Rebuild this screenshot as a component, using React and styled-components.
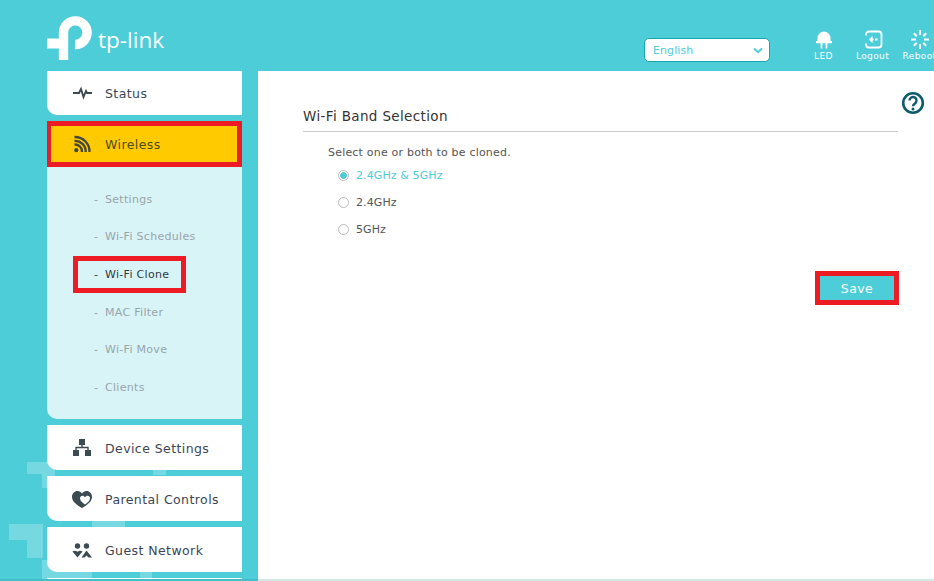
import React from 'react';
import styled, { createGlobalStyle } from 'styled-components';

const GlobalStyle = createGlobalStyle`
  html, body {
    margin: 0;
    padding: 0;
    height: 581px;
    overflow: hidden;
    font-family: "DejaVu Sans", Verdana, sans-serif;
  }
`;

const teal = '#4ccdd8';
const red = '#ed1c24';

const Page = styled.div`
  position: relative;
  display: flex;
  flex-direction: column;
  width: 934px;
  height: 581px;
  overflow: hidden;
  background: ${teal};
`;

const Watermark = styled.svg`
  position: absolute;
  left: 0;
  top: 0;
  width: 260px;
  height: 581px;
`;

const Header = styled.header`
  position: relative;
  display: flex;
  flex: none;
  height: 71px;
  padding-left: 47px;
  overflow: hidden;
`;

const Logo = styled.div`
  display: flex;
  flex: none;
  width: 597px;
  padding-top: 16px;
  box-sizing: border-box;
`;

const Wordmark = styled.span`
  margin: 9px 0 0 5px;
  font-family: "Open Sans", sans-serif;
  font-size: 22.5px;
  line-height: 30px;
  color: #fff;
`;

const LangSelect = styled.div`
  display: flex;
  flex: none;
  align-items: center;
  justify-content: space-between;
  box-sizing: border-box;
  width: 126px;
  height: 24px;
  margin: 38px 29px 0 0;
  padding: 0 6px 0 8px;
  background: #fff;
  border: 1px solid #1aa8b0;
  border-radius: 5px;
  font-size: 11px;
  letter-spacing: 0.1px;
  color: ${teal};
`;

const Action = styled.div`
  display: flex;
  flex: none;
  flex-direction: column;
  align-items: center;
  width: 49px;
  margin-left: ${p => (p.$tight ? -2 : 0)}px;
  padding-top: 30px;
  color: #fff;
  font-size: 9px;
  letter-spacing: 0.4px;
  line-height: 11px;
`;

const ActionIcon = styled.svg`
  width: 20px;
  height: 19px;
  margin-bottom: 2px;
  color: #fff;
`;

const Body = styled.div`
  position: relative;
  display: flex;
  flex: 1;
  min-height: 0;
`;

const Sidebar = styled.nav`
  display: flex;
  flex: none;
  flex-direction: column;
  gap: 6px;
  width: 195px;
  margin: 0 16px 0 47px;
  overflow: hidden;
`;

const SideGroup = styled.div`
  display: flex;
  flex: none;
  flex-direction: column;
`;

const NavItem = styled.div`
  display: flex;
  flex: none;
  align-items: center;
  box-sizing: border-box;
  height: ${p => (p.$active ? 46 : p.$short ? 44 : 45)}px;
  margin-left: ${p => (p.$active ? -1 : 0)}px;
  padding-left: ${p => (p.$active ? 19 : 23)}px;
  padding-top: ${p => (p.$active || p.$short ? 0 : 1)}px;
  background: ${p => (p.$active ? '#ffcb00' : '#fff')};
  border: ${p => (p.$active ? `5px solid ${red}` : 'none')};
  border-bottom-left-radius: ${p => (p.$active ? 0 : 10)}px;
  font-size: 12.5px;
  letter-spacing: 0.42px;
  color: ${p => (p.$active ? '#4d4a22' : '#3b4654')};
`;

const NavIcon = styled.svg`
  flex: none;
  width: 24px;
  height: 20px;
  margin-right: 11px;
  color: ${p => p.$color || '#3c4a52'};
`;

const SubMenu = styled.div`
  display: flex;
  flex-direction: column;
  align-items: flex-start;
  box-sizing: border-box;
  height: 252px;
  padding-top: 13.4px;
  background: #d9f4f6;
  border-bottom-left-radius: 10px;
`;

const SubItem = styled.div`
  display: flex;
  align-items: center;
  box-sizing: border-box;
  height: 37.7px;
  margin-left: 26px;
  padding: 0 12px 0 16px;
  border: 5px solid ${p => (p.$active ? red : 'transparent')};
  font-size: 11px;
  letter-spacing: 0.3px;
  color: ${p => (p.$active ? '#2f3a46' : '#98a4ac')};
`;

const Dash = styled.span`
  width: 11px;
  flex: none;
`;

const Main = styled.main`
  display: flex;
  flex: 1;
  flex-direction: column;
  box-sizing: border-box;
  min-width: 0;
  padding: 20px 36px 0 45px;
  background: #fff;
`;

const HelpRow = styled.div`
  display: flex;
  justify-content: flex-end;
  height: 17px;
  margin-right: -27px;
`;

const SectionTitle = styled.h2`
  margin: 0;
  height: 23px;
  border-bottom: 1px solid #ccc;
  font-size: 13.5px;
  font-weight: 400;
  line-height: 17px;
  letter-spacing: 0.36px;
  color: #333;
`;

const Hint = styled.p`
  margin: 14px 0 0 25px;
  font-size: 11px;
  line-height: 14px;
  letter-spacing: 0.2px;
  color: #555;
`;

const RadioList = styled.div`
  display: flex;
  flex-direction: column;
  margin: 2px 0 0 35px;
`;

const RadioRow = styled.label`
  display: flex;
  align-items: center;
  gap: 7px;
  height: 27px;
  font-size: 11px;
  letter-spacing: 0.1px;
  color: ${p => (p.$checked ? teal : '#555')};
`;

const Radio = styled.span`
  flex: none;
  box-sizing: border-box;
  width: 11px;
  height: 11px;
  border: 1px solid #bbb;
  border-radius: 50%;
  background: ${p => (p.$checked ? `radial-gradient(circle, ${teal} 0 3px, #fff 3.6px)` : '#fff')};
`;

const Actions = styled.div`
  display: flex;
  justify-content: flex-end;
  margin: 28px -1px 0 0;
`;

const SaveButton = styled.button`
  box-sizing: border-box;
  width: 84px;
  height: 34px;
  padding: 0;
  background: ${teal};
  border: 5px solid ${red};
  font-family: inherit;
  font-size: 12.5px;
  letter-spacing: 0.4px;
  color: #fff;
`;

const Footer = styled.div`
  position: relative;
  display: flex;
  flex: none;
  height: 2px;
`;

const FooterEdge = styled.div`
  flex: ${p => (p.$fill ? 1 : 'none')};
  width: ${p => (p.$fill ? 'auto' : '258px')};
  background: ${p => (p.$fill ? '#d5e8e8' : '#40bfc9')};
`;

const subItems = ['Settings', 'Wi-Fi Schedules', 'Wi-Fi Clone', 'MAC Filter', 'Wi-Fi Move', 'Clients'];

const bands = ['2.4GHz & 5GHz', '2.4GHz', '5GHz'];

const watermarkRects = [
  [27, 462, 28, 12],
  [42, 474, 13, 14],
  [153, 470, 13, 5],
  [92, 521, 33, 6],
  [9, 524, 34, 16],
  [27, 540, 16, 18],
  [42, 560, 50, 19],
  [140, 572, 12, 7],
];

const LogoMark = () => (
  <svg width="46" height="46" viewBox="0 0 46 46" fill="none">
    <path d="M16.500 44V16.500A11.800 11.800 0 1 1 28 28.500" stroke="#fff" strokeWidth="9.400" />
    <path d="M0 22.500H17V32.500H0Z" fill="#fff" />
  </svg>
);

const Chevron = () => (
  <svg width="10" height="7" viewBox="0 0 10 7" fill="none">
    <path d="M1 1.500L5 5.200L9 1.500" stroke={teal} strokeWidth="2" />
  </svg>
);

const LedIcon = () => (
  <ActionIcon viewBox="0 0 20 19">
    <path d="M3.500 11V8a6.500 6.500 0 0 1 13 0v3h1.500v2.200H2V11z" fill="currentColor" />
    <path d="M7.500 13v5.500M12.500 13v5.500" stroke="currentColor" strokeWidth="1.800" />
  </ActionIcon>
);

const LogoutIcon = () => (
  <ActionIcon viewBox="0 0 20 19" fill="none">
    <path d="M6 1.500h9.500a3 3 0 0 1 3 3v10a3 3 0 0 1-3 3H6a3 3 0 0 1-3-3v-1M3 5.500v-1a3 3 0 0 1 3-3" stroke="currentColor" strokeWidth="1.800" />
    <path d="M9.500 5.800L6 9.500l3.500 3.700z" fill="currentColor" />
    <path d="M8 9.500h2.500M12 9.500h2.500" stroke="currentColor" strokeWidth="1.800" />
  </ActionIcon>
);

const RebootIcon = () => (
  <ActionIcon viewBox="0 0 20 19" fill="none" stroke="currentColor" strokeWidth="2">
    <path d="M10 0v5M10 14v5M1 9.500h5M14 9.500h5M3.800 3.300l3 3M13.200 12.700l3 3M16.200 3.300l-3 3M6.800 12.700l-3 3" />
  </ActionIcon>
);

const StatusIcon = () => (
  <NavIcon viewBox="0 0 24 20" fill="none">
    <path d="M3 10h6l2-4 2.500 8 2.500-6 1 2h5" stroke="currentColor" strokeWidth="1.900" />
  </NavIcon>
);

const WirelessIcon = () => (
  <NavIcon viewBox="0 0 24 20" fill="none" $color="#45473a">
    <circle cx="6.300" cy="16.200" r="2.100" fill="currentColor" />
    <path d="M4.500 10.500a7 7 0 0 1 7.500 7.500M4.500 6.800a10.700 10.700 0 0 1 11.200 11.200M4.500 3a14.500 14.500 0 0 1 15 15" stroke="currentColor" strokeWidth="2.300" />
  </NavIcon>
);

const DeviceIcon = () => (
  <NavIcon viewBox="0 0 24 20" fill="none">
    <path d="M9 1h6v6H9zM3 12h6v6H3zM15 12h6v6h-6z" fill="currentColor" />
    <path d="M12 7v3M6 12V9.500h12V12" stroke="currentColor" strokeWidth="1.400" />
  </NavIcon>
);

const ParentalIcon = () => (
  <NavIcon viewBox="0 0 24 20">
    <path d="M12 19C6 15.500 2 12.500 2 7.800 2 4.500 4.500 2 7.500 2 9.500 2 11 3 12 4.500 13 3 14.500 2 16.500 2 19.500 2 22 4.500 22 7.800 22 12.500 18 15.500 12 19z" fill="currentColor" />
    <path d="M15 15.500c-3-2.300-5-4-5-6.300 0-1.500 1.100-2.500 2.400-2.500 1.100 0 2 .6 2.600 1.600.6-1 1.500-1.600 2.600-1.600 1.300 0 2.400 1 2.400 2.500 0 2.300-2 4-5 6.300z" fill="#fff" />
  </NavIcon>
);

const GuestIcon = () => (
  <NavIcon viewBox="0 0 24 20" fill="currentColor">
    <circle cx="7.500" cy="6" r="2.700" />
    <circle cx="16.500" cy="6" r="2.700" />
    <path d="M2.500 11.500c1.500-1.200 3.500-1 5 .2 1.500-1.200 3.500-1.400 5-.2l-5 6zM16.500 10.500l5.500 7h-3.500l-2-2-2 2H11.500z" />
  </NavIcon>
);

const HelpIcon = () => (
  <svg width="24" height="24" viewBox="0 0 24 24" fill="none">
    <circle cx="12" cy="12" r="9.800" stroke="#0e5b6c" strokeWidth="2.600" />
    <path d="M8.500 9.500a3.500 3.500 0 1 1 5.400 2.900c-1.300.9-1.900 1.400-1.900 2.800" stroke="#0e5b6c" strokeWidth="2.400" />
    <circle cx="12" cy="18" r="1.500" fill="#0e5b6c" />
  </svg>
);

export default function App() {
  return (
    <>
      <GlobalStyle />
      <Page>
        <Watermark viewBox="0 0 260 581" aria-hidden="true">
          {watermarkRects.map(([x, y, w, h]) => (
            <rect key={`${x}-${y}`} x={x} y={y} width={w} height={h} fill="#fff" fillOpacity="0.24" />
          ))}
        </Watermark>
        <Header>
          <Logo>
            <LogoMark />
            <Wordmark>tp-link</Wordmark>
          </Logo>
          <LangSelect>
            English
            <Chevron />
          </LangSelect>
          <Action>
            <LedIcon />
            LED
          </Action>
          <Action>
            <LogoutIcon />
            Logout
          </Action>
          <Action $tight>
            <RebootIcon />
            Reboot
          </Action>
        </Header>
        <Body>
          <Sidebar>
            <NavItem $short>
              <StatusIcon />
              Status
            </NavItem>
            <SideGroup>
              <NavItem $active>
                <WirelessIcon />
                Wireless
              </NavItem>
              <SubMenu>
                {subItems.map(item => (
                  <SubItem key={item} $active={item === 'Wi-Fi Clone'}>
                    <Dash>-</Dash>
                    {item}
                  </SubItem>
                ))}
              </SubMenu>
            </SideGroup>
            <NavItem>
              <DeviceIcon />
              Device Settings
            </NavItem>
            <NavItem>
              <ParentalIcon />
              Parental Controls
            </NavItem>
            <NavItem>
              <GuestIcon />
              Guest Network
            </NavItem>
            <NavItem />
          </Sidebar>
          <Main>
            <HelpRow>
              <HelpIcon />
            </HelpRow>
            <SectionTitle>Wi-Fi Band Selection</SectionTitle>
            <Hint>Select one or both to be cloned.</Hint>
            <RadioList>
              {bands.map((band, index) => (
                <RadioRow key={band} $checked={index === 0}>
                  <Radio $checked={index === 0} />
                  {band}
                </RadioRow>
              ))}
            </RadioList>
            <Actions>
              <SaveButton>Save</SaveButton>
            </Actions>
          </Main>
        </Body>
        <Footer>
          <FooterEdge />
          <FooterEdge $fill />
        </Footer>
      </Page>
    </>
  );
}
